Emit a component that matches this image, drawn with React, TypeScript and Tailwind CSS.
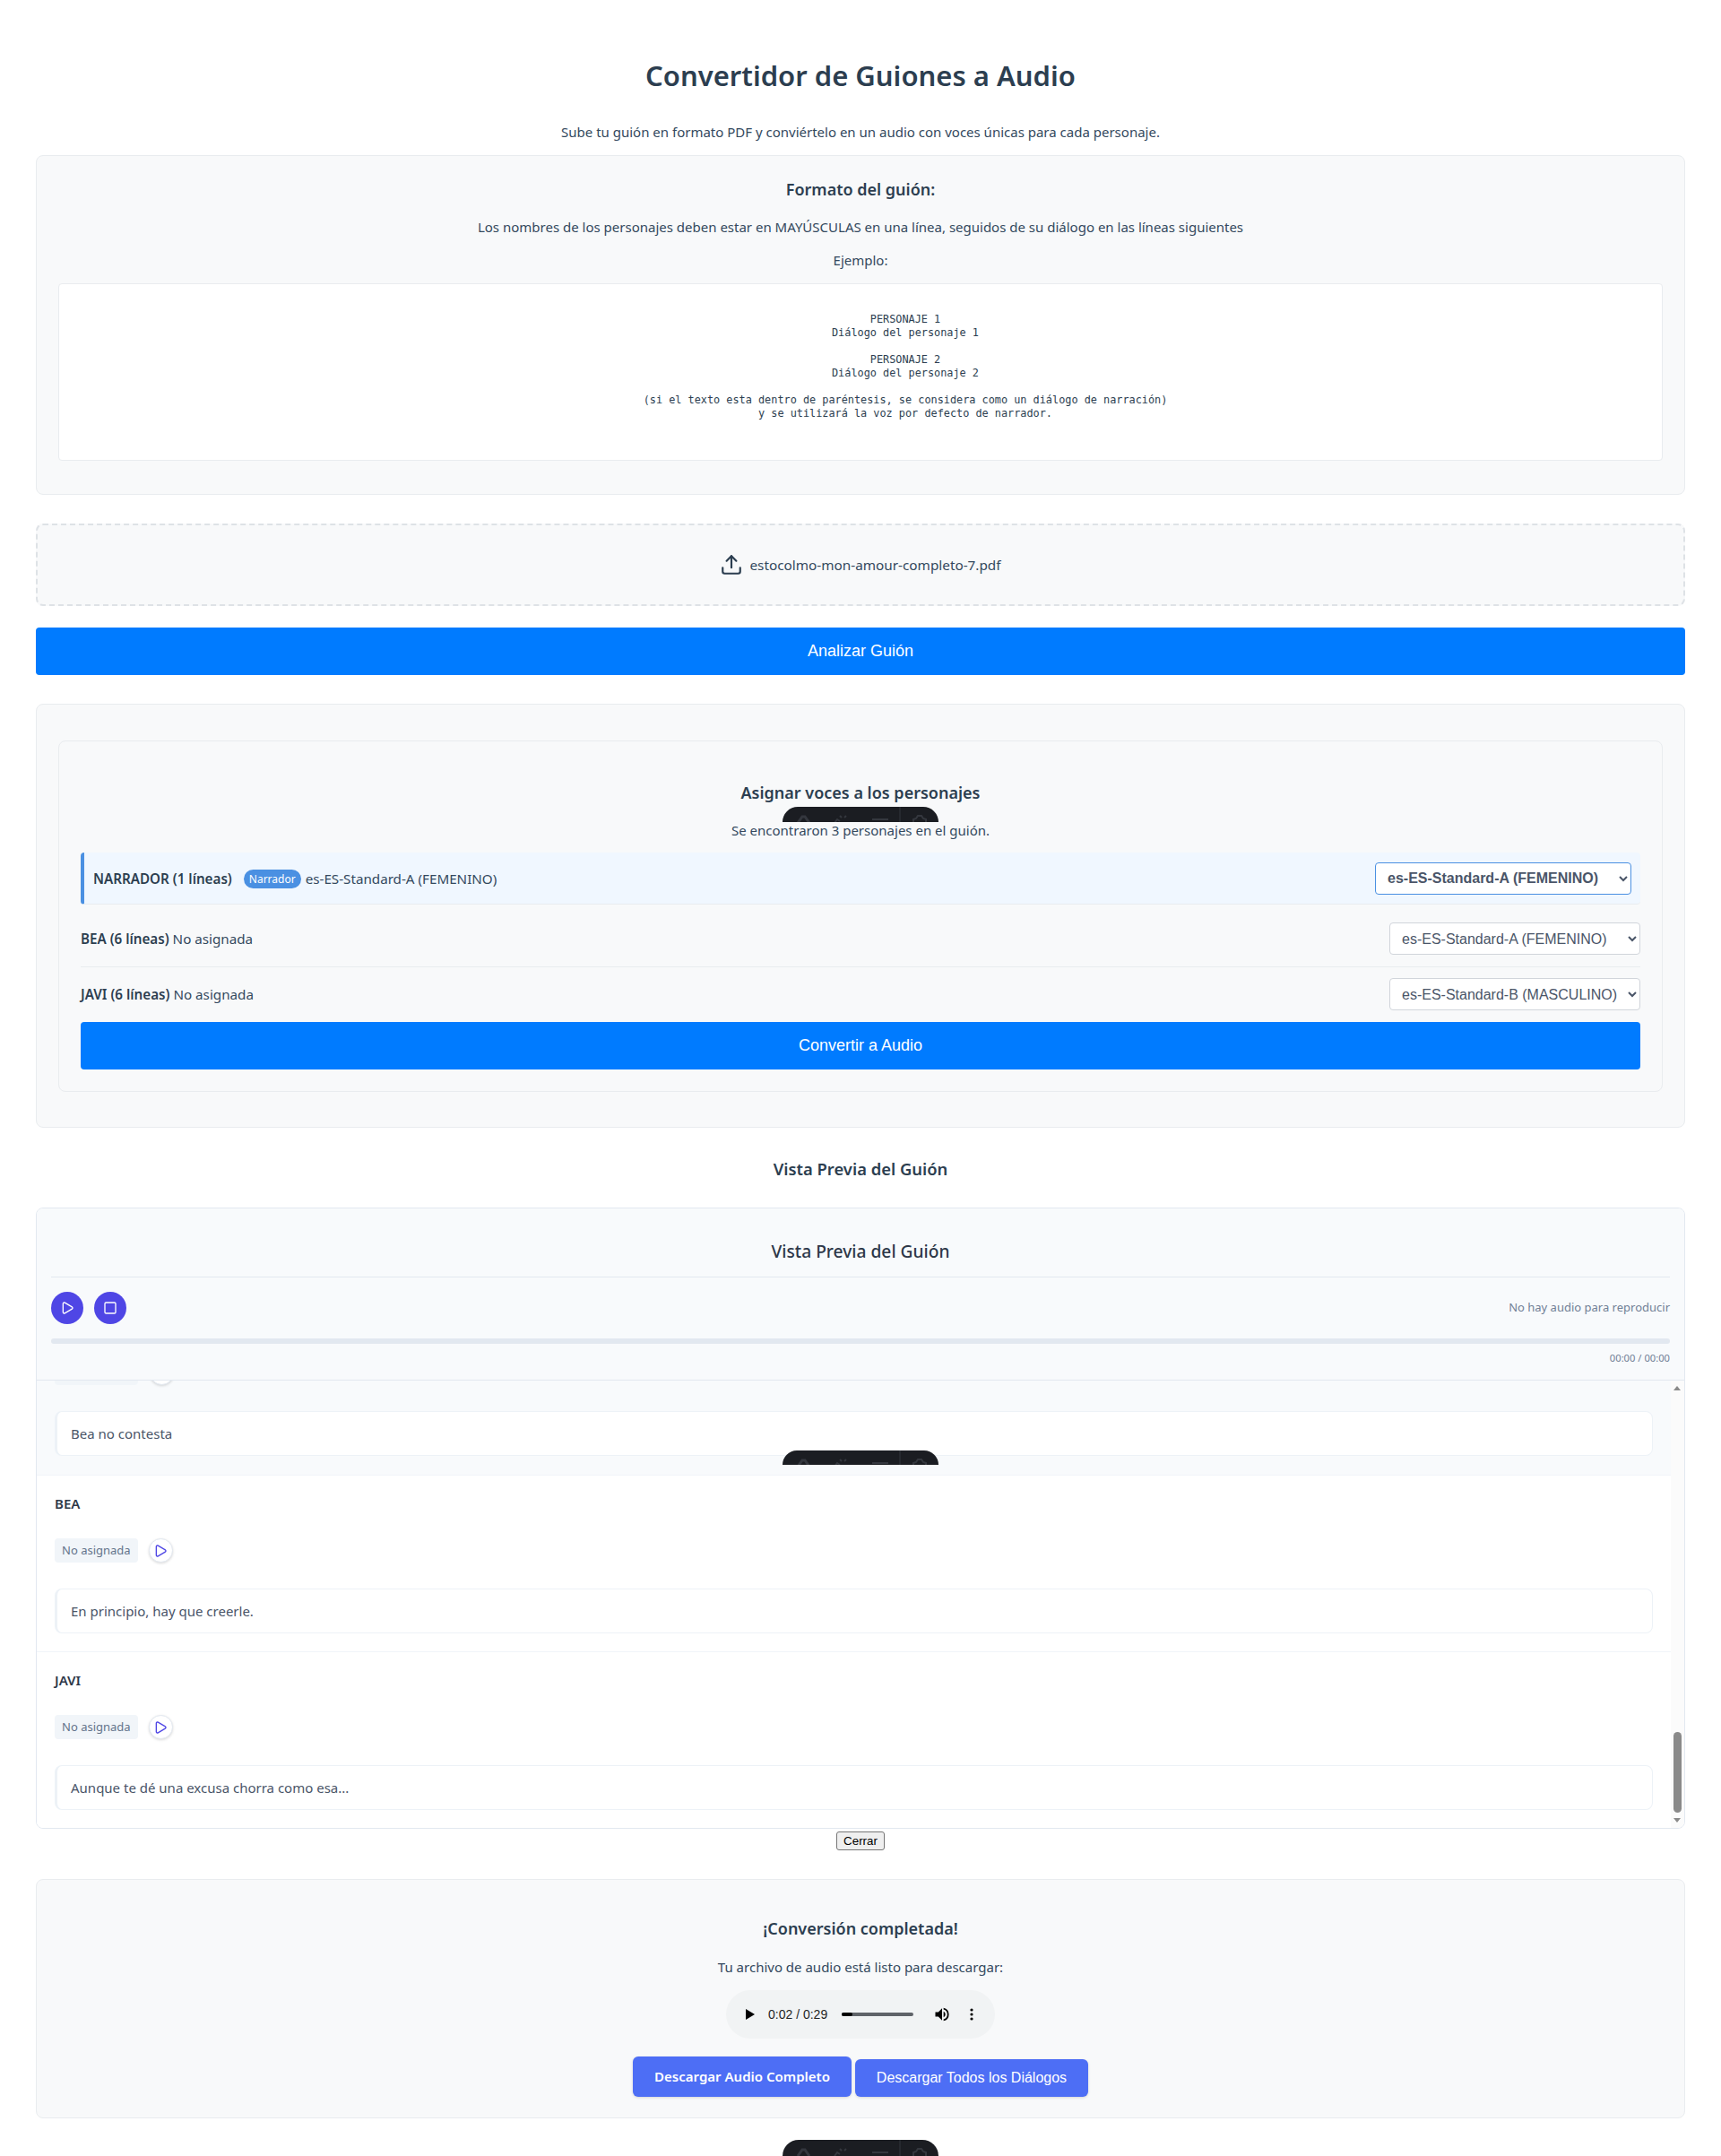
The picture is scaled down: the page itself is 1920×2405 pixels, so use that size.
import { Upload, Play, Square } from "lucide-react";

const sans = "font-['Noto_Sans','Open_Sans',sans-serif]";

function HiddenToolbar({ className }: { className: string }) {
  // floating toolbar, only its top edge peeks out
  return (
    <div className={`absolute left-1/2 -translate-x-1/2 w-[174px] overflow-hidden rounded-t-[20px] bg-[#1b1d22] ${className}`}>
      <svg width="174" height="18" viewBox="0 0 174 18" fill="none">
        <path d="M17 18l5-7h3l5 7" stroke="#34373e" strokeWidth="3" />
        <path d="M58 18l3-4 3 2M64 10l2 2M69 12l2-2" stroke="#34373e" strokeWidth="2" />
        <path d="M100 14h18" stroke="#34373e" strokeWidth="2" />
        <path d="M131 0v18" stroke="#33363d" strokeWidth="1" />
        <path d="M146 18v-4l3-1 2-3h4l2 3 3 1v4" stroke="#34373e" strokeWidth="2" />
      </svg>
    </div>
  );
}

function VoiceSelect({ value, strong }: { value: string; strong?: boolean }) {
  return (
    <select
      defaultValue={value}
      className={`h-9 rounded-[4px] border bg-white pl-[9px] pr-0 text-[16px] text-[#4a5568] font-['Liberation_Sans',sans-serif] ${
        strong ? "w-[286px] border-[#4a90e2] font-bold" : "w-[280px] border-[#d1d5db]"
      }`}
    >
      <option>{value}</option>
    </select>
  );
}

function DialogRow({ name, text }: { name: string; text: string }) {
  return (
    <div className="border-b border-[#f1f5f9] bg-white px-5 pt-5 pb-[20px] last:border-b-0">
      <div className="text-[15px] font-semibold leading-[22px] text-[#2d3748]">{name}</div>
      <div className="mt-[28px] flex items-center gap-[12px]">
        <span className="rounded-[4px] bg-[#f1f5f9] px-2 text-[13px] leading-[27px] text-[#64748b]">No asignada</span>
        <span className="flex size-[27px] items-center justify-center rounded-full border border-[#e2e8f0] bg-white shadow-[0_1px_3px_rgba(0,0,0,0.15)]">
          <Play size={16} className="text-[#4f46e5]" />
        </span>
      </div>
      <div className="mt-[29px] rounded-[8px] border border-l-[3px] border-[#edf2f7] bg-white px-[15px] py-[13px] text-[15px] leading-[22px] text-[#4a5568]">
        {text}
      </div>
    </div>
  );
}

export default function App() {
  return (
    <div className={`relative h-[2405px] overflow-hidden bg-white px-10 pt-[62px] text-center text-[15px] text-[#34495e] ${sans}`}>
      <h1 className="text-[31px] font-semibold leading-[45px] text-[#2c3e50]">Convertidor de Guiones a Audio</h1>
      <p className="mt-[29px] leading-[22px]">Sube tu guión en formato PDF y conviértelo en un audio con voces únicas para cada personaje.</p>

      {/* Formato */}
      <div className="mt-[15px] h-[379px] rounded-[8px] border border-[#e9ecef] bg-[#f8f9fa] px-6 pt-[25px]">
        <h3 className="text-[18px] font-semibold leading-[25px] text-[#2c3e50]">Formato del guión:</h3>
        <p className="mt-[18px] leading-[22px]">Los nombres de los personajes deben estar en MAYÚSCULAS en una línea, seguidos de su diálogo en las líneas siguientes</p>
        <p className="mt-[15px] leading-[22px]">Ejemplo:</p>
        <pre className="mt-[15px] h-[198px] rounded-[4px] border border-[#e9ecef] bg-white pl-[100px] pt-[32px] font-['DejaVu_Sans_Mono','Liberation_Mono',monospace] text-[11.85px] leading-[15px] text-[#2c3e50]">
{`PERSONAJE 1
Diálogo del personaje 1

PERSONAJE 2
Diálogo del personaje 2

(si el texto esta dentro de paréntesis, se considera como un diálogo de narración)
y se utilizará la voz por defecto de narrador.`}
        </pre>
      </div>

      {/* Archivo */}
      <div className="mt-[32px] flex h-[92px] items-center justify-center gap-[7px] rounded-[8px] border-2 border-dashed border-[#dee2e6] bg-[#f8f9fa] text-[15.3px]">
        <Upload size={26} strokeWidth={2} className="text-[#2c3e50]" />
        <span>estocolmo-mon-amour-completo-7.pdf</span>
      </div>
      <button className="mt-[24px] h-[53px] w-full rounded-[4px] bg-[#007bff] font-['Liberation_Sans',sans-serif] text-[18px] text-white">Analizar Guión</button>

      {/* Voces */}
      <div className="mt-[32px] h-[473px] rounded-[8px] border border-[#e9ecef] bg-[#f8f9fa] px-6 pt-[40px]">
        <div className="relative h-[392px] rounded-[8px] border border-[#e9ecef] px-6 pt-[45px]">
          <h3 className="text-[18px] font-semibold leading-[25px] text-[#2c3e50]">Asignar voces a los personajes</h3>
          <HiddenToolbar className="top-[73px] h-[17px]" />
          <p className="mt-[18px] leading-[22px]">Se encontraron 3 personajes en el guión.</p>

          <div className="mt-[14px] flex h-[58px] items-center justify-between rounded-[4px] border-b border-[#e9ecef] border-l-4 border-l-[#4a90e2] bg-[#f0f7ff] px-[10px] text-left">
            <div className="flex items-center pt-[2px] text-[15.2px]">
              <span className="font-semibold text-[#2c3e50]">NARRADOR (1 líneas)</span>
              <span className="ml-[13px] rounded-full bg-[#4a90e2] px-[6px] text-[12px] leading-[21px] text-white">Narrador</span>
              <span className="ml-[5px]">es-ES-Standard-A (FEMENINO)</span>
            </div>
            <VoiceSelect value="es-ES-Standard-A (FEMENINO)" strong />
          </div>
          <div className="flex items-center justify-between border-b border-[#e9ecef] pt-5 pb-[13px] text-left text-[15.2px]">
            <div><span className="font-semibold text-[#2c3e50]">BEA (6 líneas)</span> No asignada</div>
            <VoiceSelect value="es-ES-Standard-A (FEMENINO)" />
          </div>
          <div className="flex items-center justify-between pt-3 pb-[13px] text-left text-[15.2px]">
            <div><span className="font-semibold text-[#2c3e50]">JAVI (6 líneas)</span> No asignada</div>
            <VoiceSelect value="es-ES-Standard-B (MASCULINO)" />
          </div>
          <button className="h-[53px] w-full rounded-[4px] bg-[#007bff] font-['Liberation_Sans',sans-serif] text-[18px] text-white">Convertir a Audio</button>
        </div>
      </div>

      <h3 className="mt-[32px] text-[18.4px] font-semibold leading-[27px] text-[#2c3e50]">Vista Previa del Guión</h3>

      {/* Preview */}
      <div className="relative mt-[30px] h-[693px] overflow-hidden rounded-[8px] border border-[#e2e8f0] bg-white">
        <div className="h-[192px] border-b border-[#e2e8f0] bg-[#f8fafc] px-4 pt-[34px]">
          <div className="h-[43px] border-b border-[#e2e8f0] text-[19.2px] font-medium leading-[27px] text-[#2d3748]">Vista Previa del Guión</div>
          <div className="mt-4 flex items-center justify-between">
            <div className="flex gap-3">
              <span className="flex size-9 items-center justify-center rounded-full bg-[#4f46e5]"><Play size={16} className="text-white" /></span>
              <span className="flex size-9 items-center justify-center rounded-full bg-[#4f46e5]"><Square size={16} className="text-white" /></span>
            </div>
            <span className="text-[13px] text-[#718096]">No hay audio para reproducir</span>
          </div>
          <div className="mt-4 h-[6px] rounded-full bg-[#e2e8f0]" />
          <div className="mt-2 text-right text-[11.2px] leading-[16px] text-[#718096]">00:00 / 00:00</div>
        </div>

        <div className="flex h-[499px]">
          <div className="relative min-w-0 flex-1 overflow-hidden text-left">
            <div className="h-[106px] border-b border-[#f1f5f9] bg-[#f8fafc] px-5 pt-[34px]">
              <div className="absolute left-5 top-0 h-[5px] w-[93px] rounded-b-[4px] bg-[#f1f5f9]" />
              <div className="absolute -top-[22px] left-[126px] size-[27px] rounded-full border border-[#e2e8f0] bg-white shadow-[0_1px_3px_rgba(0,0,0,0.15)]" />
              <div className="rounded-[8px] border border-l-[3px] border-[#edf2f7] bg-white px-[15px] py-[13px] text-[15px] leading-[22px] text-[#4a5568]">Bea no contesta</div>
            </div>
            <DialogRow name="BEA" text="En principio, hay que creerle." />
            <DialogRow name="JAVI" text="Aunque te dé una excusa chorra como esa..." />
          </div>
          {/* scrollbar */}
          <div className="relative w-[15px] bg-[#fbfbfb]">
            <div className="absolute left-[3px] top-[6px] size-0 border-x-[4.5px] border-b-[5px] border-x-transparent border-b-[#8a8a8a]" />
            <div className="absolute left-[3px] top-[392px] h-[90px] w-[9px] rounded-full bg-[#8a8a8a]" />
            <div className="absolute bottom-[6px] left-[3px] size-0 border-x-[4.5px] border-t-[5px] border-x-transparent border-t-[#8a8a8a]" />
          </div>
        </div>
        <HiddenToolbar className="top-[270px] h-[16px]" />
      </div>

      <button className="mx-auto mt-[3px] block h-[21px] w-[54px] rounded-[3px] border border-[#767676] bg-[#efefef] font-['Liberation_Sans',sans-serif] text-[13.33px] leading-[17px] text-black">Cerrar</button>

      {/* Resultado */}
      <div className="mt-[32px] h-[267px] rounded-[8px] border border-[#e9ecef] bg-[#f8f9fa] pt-[42px]">
        <h3 className="text-[18px] font-semibold leading-[25px] text-[#2c3e50]">¡Conversión completada!</h3>
        <p className="mt-[19px] leading-[22px]">Tu archivo de audio está listo para descargar:</p>
        <div className="mx-auto mt-[15px] flex h-[54px] w-[300px] items-center rounded-full bg-[#f1f3f4] pl-[22px] font-['Liberation_Sans',sans-serif] text-[14px] text-[#1f1f1f]">
          <svg width="10" height="12" viewBox="0 0 10 12"><path d="M0 0l10 6-10 6z" fill="#000" /></svg>
          <span className="ml-[15px]">0:02 / 0:29</span>
          <div className="ml-4 h-1 w-20 rounded-full bg-[#5f6368]">
            <div className="h-1 w-3 rounded-full bg-black" />
          </div>
          <svg className="ml-[22px]" width="20" height="20" viewBox="0 0 24 24" fill="#000"><path d="M3 9v6h4l5 5V4L7 9H3zm13.5 3A4.5 4.5 0 0 0 14 8v8a4.5 4.5 0 0 0 2.5-4zM14 3.2v2.1a7 7 0 0 1 0 13.4v2.1a9 9 0 0 0 0-17.6z" /></svg>
          <svg className="ml-[21px]" width="4" height="14" viewBox="0 0 4 14" fill="#000"><circle cx="2" cy="2" r="1.6" /><circle cx="2" cy="7" r="1.6" /><circle cx="2" cy="12" r="1.6" /></svg>
        </div>
        <div className="mt-[20px] flex items-end justify-center gap-1">
          <button className="h-[45px] w-[244px] rounded-[6px] bg-[#4d6ef5] text-[15px] font-semibold text-white shadow-[0_1px_3px_rgba(0,0,0,0.15)]">Descargar Audio Completo</button>
          <button className="h-[42px] w-[260px] rounded-[6px] bg-[#4d6ef5] font-['Liberation_Sans',sans-serif] text-[16px] text-white shadow-[0_1px_3px_rgba(0,0,0,0.15)]">Descargar Todos los Diálogos</button>
        </div>
      </div>

      <HiddenToolbar className="top-[2387px] h-[18px]" />
    </div>
  );
}
